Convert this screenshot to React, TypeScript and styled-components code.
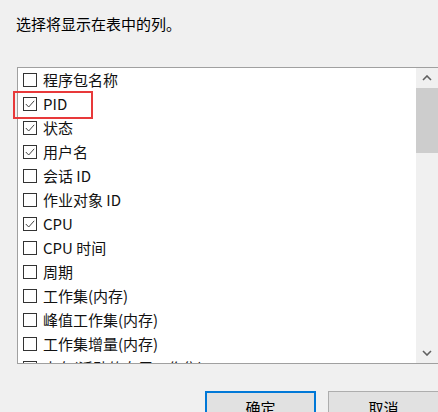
import React from "react";
import styled, { createGlobalStyle } from "styled-components";

const Global = createGlobalStyle`
  html, body { margin: 0; padding: 0; background: #f0f0f0; }
  body { width: 438px; height: 412px; overflow: hidden; }
  #root { width: 438px; height: 412px; overflow: hidden; }
`;

const Dialog = styled.div`
  width: 438px;
  height: 412px;
  background: #f0f0f0;
  font-family: "Noto Sans CJK SC", "Noto Sans", sans-serif;
  color: #000;
  display: flex;
  flex-direction: column;
  overflow: hidden;
`;

const Title = styled.div`
  margin: 14px 0 0 16px;
  font-size: 15px;
  line-height: 20px;
  height: 20px;
`;

const ListBox = styled.div`
  position: relative;
  margin: 33px 0 0 17px;
  width: 422px;
  height: 297px;
  box-sizing: border-box;
  border: 1px solid #a0a0a0;
  background: #fff;
  display: flex;
  flex-shrink: 0;
`;

const Rows = styled.div`
  flex: 1;
  overflow: hidden;
  display: flex;
  flex-direction: column;
`;

const Row = styled.div`
  height: 24px;
  flex-shrink: 0;
  display: flex;
  align-items: center;
  padding-left: 5px;
  gap: 6px;
  font-size: 15px;
  line-height: 24px;
  white-space: nowrap;
  color: #111;
`;

const Box = styled.span`
  width: 14px;
  height: 14px;
  box-sizing: border-box;
  border: 1px solid #333;
  background: #fff;
  display: inline-flex;
  align-items: center;
  justify-content: center;
  flex-shrink: 0;
`;

const Highlight = styled.div`
  position: absolute;
  left: -5px;
  top: 23px;
  width: 80px;
  height: 28px;
  box-sizing: border-box;
  border: 2px solid #e8393a;
  pointer-events: none;
`;

const ScrollBar = styled.div`
  width: 22px;
  flex-shrink: 0;
  background: #f0f0f0;
  display: flex;
  flex-direction: column;
`;

const Arrow = styled.div`
  height: 20px;
  display: flex;
  align-items: center;
  justify-content: center;
`;

const Track = styled.div`
  flex: 1;
  display: flex;
  flex-direction: column;
`;

const Thumb = styled.div`
  height: 65px;
  background: #cdcdcd;
`;

const Buttons = styled.div`
  display: flex;
  gap: 12px;
  margin: 27px 0 0 205px;
`;

const Button = styled.div<{ $primary?: boolean }>`
  width: 111px;
  height: 30px;
  flex-shrink: 0;
  box-sizing: border-box;
  background: #e1e1e1;
  border: ${(p) => (p.$primary ? "2px solid #0078d7" : "1px solid #adadad")};
  display: flex;
  justify-content: center;
  padding-top: ${(p) => (p.$primary ? "5px" : "6px")};
  font-size: 15px;
  line-height: 20px;
`;

const Check = () => (
  <svg width="12" height="12" viewBox="0 0 12 12">
    <polyline points="1.8,6 4.7,9 10.2,2.8" fill="none" stroke="#444" strokeWidth="1" />
  </svg>
);

const items: [string, boolean][] = [
  ["程序包名称", false],
  ["PID", true],
  ["状态", true],
  ["用户名", true],
  ["会话 ID", false],
  ["作业对象 ID", false],
  ["CPU", true],
  ["CPU 时间", false],
  ["周期", false],
  ["工作集(内存)", false],
  ["峰值工作集(内存)", false],
  ["工作集增量(内存)", false],
  ["内存(活动的专用工作集)", false],
];

export default function App() {
  return (
    <Dialog>
      <Global />
      <Title>选择将显示在表中的列。</Title>
      <ListBox>
        <Rows>
          {items.map(([label, checked]) => (
            <Row key={label}>
              <Box>{checked && <Check />}</Box>
              <span>{label}</span>
            </Row>
          ))}
        </Rows>
        <ScrollBar>
          <Arrow>
            <svg width="10" height="6" viewBox="0 0 10 6">
              <polyline points="1,5 5,1 9,5" fill="none" stroke="#606060" strokeWidth="1.6" />
            </svg>
          </Arrow>
          <Track>
            <Thumb />
          </Track>
          <Arrow>
            <svg width="10" height="6" viewBox="0 0 10 6">
              <polyline points="1,1 5,5 9,1" fill="none" stroke="#606060" strokeWidth="1.6" />
            </svg>
          </Arrow>
        </ScrollBar>
        <Highlight />
      </ListBox>
      <Buttons>
        <Button $primary>确定</Button>
        <Button>取消</Button>
      </Buttons>
    </Dialog>
  );
}
